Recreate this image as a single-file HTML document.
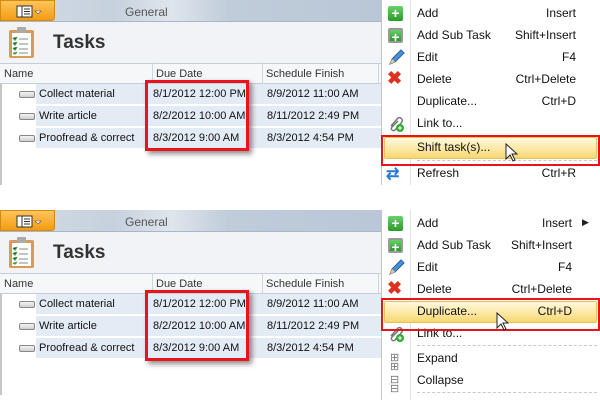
<!DOCTYPE html>
<html><head><meta charset="utf-8"><style>
*{margin:0;padding:0;box-sizing:border-box}
body{width:600px;height:400px;position:relative;overflow:hidden;background:#fff;font-family:"Liberation Sans",sans-serif;font-size:11px;color:#1e1e1e}
.a{position:absolute}
.panel{position:absolute;left:0;width:600px;height:185px;overflow:hidden}
.bar{left:0;top:0;width:381px;height:22px;background:linear-gradient(90deg,#d5dde6 0,#c6d1dd 30%,#dfe5ec 45%,#c0ccda 60%,#b9c7d6 100%);border-bottom:1px solid #a7b6c8}
.orb{left:0;top:0;width:55px;height:21px;background:linear-gradient(#ffc45a,#f39c12);border:1px solid #d88a10;border-radius:0 0 3px 0}
.gen{left:125px;top:5px;color:#555;font-size:12px}
.tarea{left:0;top:22px;width:381px;height:41px;background:#f1f3f6}
.title{left:53px;top:32px;font-size:19px;font-weight:bold;color:#333}
.hdr{left:0;top:63px;width:381px;height:21px;background:#f6f7f8;border-top:1px solid #c5ced8;border-bottom:1px solid #c5ced8}
.hdr span{position:absolute;top:4px;color:#333}
.row{left:36px;width:345px;height:21px;background:#e3ebf5;border-bottom:1px solid #fff}
.cell{position:absolute;top:4px;color:#111}
.tic{left:19px;width:16px;height:7px;border:1px solid #888;border-radius:2px;background:linear-gradient(#f4f4f4,#cfcfcf)}
.lb{left:0;top:84px;width:2px;height:101px;background:#c5c5c5}
.vl{width:1px;background:#d0d6de}
.red{left:145px;top:80px;width:104px;height:71px;border:3px solid #e8141c;box-shadow:3px 3px 5px rgba(0,0,0,.45)}
.menu{left:381px;top:0;width:219px;height:185px;background:#fff;border-left:1px solid #c4c4c4}
.sep{left:410px;top:0;width:1px;height:185px;background:#e2e2e2}
.mi{position:absolute;left:417px;font-size:12px;color:#111}
.sc{position:absolute;right:24px;font-size:12px;color:#111;text-align:right}
.hl{position:absolute;left:384px;width:213px;height:22px;border:1px solid #e6c35a;border-radius:2px;background:linear-gradient(#fff9dc,#fbe6a0 60%,#f6d66e)}
.rb{position:absolute;left:381px;width:219px;height:31px;border:2px solid #e8141c}
.dash{position:absolute;left:417px;width:180px;border-top:1px dashed #c8c8c8}
.plus{position:absolute;left:388px;width:15px;height:15px;border-radius:2px;background:linear-gradient(#6ad06a,#2a9a2a);color:#fff;font-weight:bold;font-size:14px;line-height:14px;text-align:center}
</style></head><body>

<!-- PANEL 1 -->
<div class="panel" style="top:0">
 <div class="a bar"></div>
 <div class="a orb"><svg width="55" height="21"><rect x="16" y="5" width="15" height="11" fill="#fff" stroke="#333"/><line x1="21" y1="5" x2="21" y2="16" stroke="#333"/><line x1="23" y1="8" x2="29" y2="8" stroke="#333"/><line x1="23" y1="10.5" x2="29" y2="10.5" stroke="#333"/><line x1="23" y1="13" x2="29" y2="13" stroke="#333"/><path d="M34 10h6l-3 3z" fill="#fff" stroke="#555" stroke-width=".6"/></svg></div>
 <div class="a gen">General</div>
 <div class="a tarea"></div>
 <svg class="a" style="left:8px;top:26px" width="28" height="34"><rect x="1" y="4" width="25" height="28" rx="2" fill="#d89a55"/><rect x="4" y="7" width="19" height="23" fill="#fff"/><rect x="9" y="1" width="9" height="6" rx="1" fill="#aaa"/><g stroke="#3a3" stroke-width="1.3"><path d="M5 12l2 2 2-3M5 17l2 2 2-3M5 22l2 2 2-3M5 27l2 1 2-2"/></g><g stroke="#888"><path d="M11 13h9M11 18h9M11 23h9M11 27h9"/></g></svg>
 <div class="a title">Tasks</div>
 <div class="a hdr"><span style="left:4px">Name</span><span style="left:156px">Due Date</span><span style="left:266px">Schedule Finish</span></div>
 <div class="a vl" style="left:152px;top:63px;height:21px"></div>
 <div class="a vl" style="left:262px;top:63px;height:21px"></div>
 <div class="a vl" style="left:378px;top:63px;height:21px"></div>
 <div class="a lb"></div>
 <div class="a row" style="top:84px"><span class="cell" style="left:3px">Collect material</span><span class="cell" style="left:117px">8/1/2012 12:00 PM</span><span class="cell" style="left:231px">8/9/2012 11:00 AM</span></div>
 <div class="a row" style="top:106px"><span class="cell" style="left:3px">Write article</span><span class="cell" style="left:117px">8/2/2012 10:00 AM</span><span class="cell" style="left:231px">8/11/2012 2:49 PM</span></div>
 <div class="a row" style="top:128px"><span class="cell" style="left:3px">Proofread &amp; correct</span><span class="cell" style="left:117px">8/3/2012 9:00 AM</span><span class="cell" style="left:231px">8/3/2012 4:54 PM</span></div>
 <div class="a tic" style="top:91px"></div><div class="a tic" style="top:113px"></div><div class="a tic" style="top:135px"></div>
 <div class="a red"></div>

 <div class="a menu"></div>
 <div class="a sep"></div>
 <div class="plus" style="top:6px">+</div>
 <div class="plus" style="top:28px;border:2px solid #999">+</div>
 <svg class="a" style="left:387px;top:49px" width="18" height="18"><path d="M3 15l2-5 9-9 3 3-9 9z" fill="#4a8fd8" stroke="#2a5f9a"/><path d="M3 15l2-5 3 3z" fill="#f0c890"/></svg>
 <div class="a" style="left:387px;top:68px;color:#e03020;font-weight:bold;font-size:18px">✖</div>
 <svg class="a" style="left:387px;top:114px" width="18" height="18"><path d="M4 12l7-8a3 3 0 0 1 4 4l-7 8a2 2 0 0 1-3-3l6-6" fill="none" stroke="#777" stroke-width="1.5"/><circle cx="13" cy="14" r="4" fill="#3a3"/><path d="M11 14h4M13 12v4" stroke="#fff"/></svg>
 <div class="mi" style="top:6px">Add</div><div class="sc" style="top:6px">Insert</div>
 <div class="mi" style="top:28px">Add Sub Task</div><div class="sc" style="top:28px">Shift+Insert</div>
 <div class="mi" style="top:50px">Edit</div><div class="sc" style="top:50px">F4</div>
 <div class="mi" style="top:72px">Delete</div><div class="sc" style="top:72px">Ctrl+Delete</div>
 <div class="mi" style="top:94px">Duplicate...</div><div class="sc" style="top:94px">Ctrl+D</div>
 <div class="mi" style="top:116px">Link to...</div>
 <div class="hl" style="top:137px"></div>
 <div class="mi" style="top:140px">Shift task(s)...</div>
 <div class="dash" style="top:160px"></div>
 <div class="rb" style="top:135px"></div>
 <svg class="a" style="left:505px;top:143px" width="14" height="20"><path d="M1 1v15l4-4 3 6 2-1-3-6h5z" fill="#fff" stroke="#222" stroke-width="1"/></svg>
 <div class="a" style="left:386px;top:164px;color:#2a7ad8;font-size:16px;font-weight:bold">⇄</div>
 <div class="mi" style="top:166px">Refresh</div><div class="sc" style="top:166px">Ctrl+R</div>
</div>

<!-- PANEL 2 -->
<div class="panel" style="top:210px;height:190px">
 <div class="a bar"></div>
 <div class="a orb"><svg width="55" height="21"><rect x="16" y="5" width="15" height="11" fill="#fff" stroke="#333"/><line x1="21" y1="5" x2="21" y2="16" stroke="#333"/><line x1="23" y1="8" x2="29" y2="8" stroke="#333"/><line x1="23" y1="10.5" x2="29" y2="10.5" stroke="#333"/><line x1="23" y1="13" x2="29" y2="13" stroke="#333"/><path d="M34 10h6l-3 3z" fill="#fff" stroke="#555" stroke-width=".6"/></svg></div>
 <div class="a gen">General</div>
 <div class="a tarea"></div>
 <svg class="a" style="left:8px;top:26px" width="28" height="34"><rect x="1" y="4" width="25" height="28" rx="2" fill="#d89a55"/><rect x="4" y="7" width="19" height="23" fill="#fff"/><rect x="9" y="1" width="9" height="6" rx="1" fill="#aaa"/><g stroke="#3a3" stroke-width="1.3"><path d="M5 12l2 2 2-3M5 17l2 2 2-3M5 22l2 2 2-3M5 27l2 1 2-2"/></g><g stroke="#888"><path d="M11 13h9M11 18h9M11 23h9M11 27h9"/></g></svg>
 <div class="a title">Tasks</div>
 <div class="a hdr"><span style="left:4px">Name</span><span style="left:156px">Due Date</span><span style="left:266px">Schedule Finish</span></div>
 <div class="a vl" style="left:152px;top:63px;height:21px"></div>
 <div class="a vl" style="left:262px;top:63px;height:21px"></div>
 <div class="a vl" style="left:378px;top:63px;height:21px"></div>
 <div class="a lb"></div>
 <div class="a row" style="top:84px"><span class="cell" style="left:3px">Collect material</span><span class="cell" style="left:117px">8/1/2012 12:00 PM</span><span class="cell" style="left:231px">8/9/2012 11:00 AM</span></div>
 <div class="a row" style="top:106px"><span class="cell" style="left:3px">Write article</span><span class="cell" style="left:117px">8/2/2012 10:00 AM</span><span class="cell" style="left:231px">8/11/2012 2:49 PM</span></div>
 <div class="a row" style="top:128px"><span class="cell" style="left:3px">Proofread &amp; correct</span><span class="cell" style="left:117px">8/3/2012 9:00 AM</span><span class="cell" style="left:231px">8/3/2012 4:54 PM</span></div>
 <div class="a tic" style="top:91px"></div><div class="a tic" style="top:113px"></div><div class="a tic" style="top:135px"></div>
 <div class="a red"></div>

 <div class="a menu" style="height:190px"></div>
 <div class="a sep" style="height:190px"></div>
 <div class="plus" style="top:6px">+</div>
 <div class="plus" style="top:28px;border:2px solid #999">+</div>
 <svg class="a" style="left:387px;top:49px" width="18" height="18"><path d="M3 15l2-5 9-9 3 3-9 9z" fill="#4a8fd8" stroke="#2a5f9a"/><path d="M3 15l2-5 3 3z" fill="#f0c890"/></svg>
 <div class="a" style="left:387px;top:68px;color:#e03020;font-weight:bold;font-size:18px">✖</div>
 <svg class="a" style="left:387px;top:114px" width="18" height="18"><path d="M4 12l7-8a3 3 0 0 1 4 4l-7 8a2 2 0 0 1-3-3l6-6" fill="none" stroke="#777" stroke-width="1.5"/><circle cx="13" cy="14" r="4" fill="#3a3"/><path d="M11 14h4M13 12v4" stroke="#fff"/></svg>
 <div class="mi" style="top:6px">Add</div><div class="sc" style="top:6px;right:28px">Insert</div>
 <div class="a" style="left:582px;top:7px;font-size:9px">▶</div>
 <div class="mi" style="top:28px">Add Sub Task</div><div class="sc" style="top:28px;right:28px">Shift+Insert</div>
 <div class="mi" style="top:50px">Edit</div><div class="sc" style="top:50px;right:28px">F4</div>
 <div class="mi" style="top:72px">Delete</div><div class="sc" style="top:72px;right:28px">Ctrl+Delete</div>
 <div class="hl" style="top:91px"></div>
 <div class="mi" style="top:94px">Duplicate...</div><div class="sc" style="top:94px;right:28px">Ctrl+D</div>
 <div class="mi" style="top:116px">Link to...</div>
 <div class="rb" style="top:88px;height:33px"></div>
 <svg class="a" style="left:496px;top:102px" width="14" height="20"><path d="M1 1v15l4-4 3 6 2-1-3-6h5z" fill="#fff" stroke="#222" stroke-width="1"/></svg>
 <div class="dash" style="top:135px"></div>
 <div class="a" style="left:390px;top:144px;font-size:11px;color:#777;line-height:9px">⊞<br>⊞</div>
 <div class="mi" style="top:141px">Expand</div>
 <div class="a" style="left:390px;top:166px;font-size:11px;color:#777;line-height:9px">⊟<br>⊟</div>
 <div class="mi" style="top:163px">Collapse</div>
 <div class="dash" style="top:182px"></div>
</div>
</body></html>
